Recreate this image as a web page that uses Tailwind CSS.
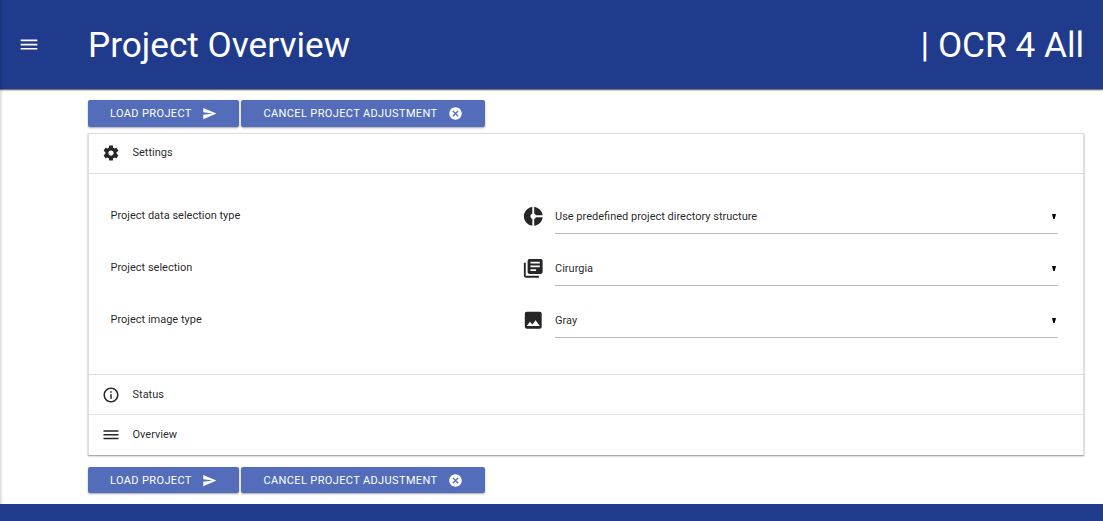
<!DOCTYPE html>
<html lang="en">
<head>
<meta charset="utf-8">
<title>Project Overview</title>
<script src="https://cdn.jsdelivr.net/npm/@tailwindcss/browser@4"></script>
</head>
<body class="relative flex h-[521px] w-[1103px] flex-col overflow-hidden bg-white font-['Roboto',sans-serif] text-[11px] text-black/87">
<svg class="hidden">
  <symbol id="menu" viewBox="0 0 24 24"><path d="M2 15.500v2h20v-2H2zm0-5v2h20v-2H2zm0-5v2h20v-2H2z"/></symbol>
  <symbol id="send" viewBox="0 0 24 24"><path d="M2.010 21L23 12 2.010 3 2 10l15 2-15 2z"/></symbol>
  <symbol id="cancel" viewBox="0 0 24 24"><path d="M12 2C6.470 2 2 6.470 2 12s4.470 10 10 10 10-4.470 10-10S17.530 2 12 2zm5 13.590L15.590 17 12 13.410 8.410 17 7 15.590 10.590 12 7 8.410 8.410 7 12 10.590 15.590 7 17 8.410 13.410 12 17 15.590z"/></symbol>
  <symbol id="settings" viewBox="0 0 24 24"><path d="M19.430 12.980c.04-.32.07-.64.07-.98s-.03-.66-.07-.98l2.110-1.650c.19-.15.24-.42.12-.64l-2-3.460c-.12-.22-.39-.3-.61-.22l-2.490 1c-.52-.4-1.080-.73-1.690-.98l-.38-2.650C14.460 2.180 14.250 2 14 2h-4c-.25 0-.46.18-.49.42l-.38 2.650c-.61.25-1.170.59-1.690.98l-2.490-1c-.23-.09-.49 0-.61.22l-2 3.460c-.13.22-.07.49.12.64l2.110 1.650c-.04.32-.07.65-.07.98s.03.66.07.98l-2.110 1.650c-.19.15-.24.42-.12.64l2 3.460c.12.22.39.3.61.22l2.490-1c.52.4 1.080.73 1.690.98l.38 2.650c.03.24.24.42.49.42h4c.25 0 .46-.18.49-.42l.38-2.650c.61-.25 1.170-.59 1.690-.98l2.490 1c.23.09.49 0 .61-.22l2-3.460c.12-.22.07-.49-.12-.64l-2.110-1.650zM12 15.500c-1.930 0-3.500-1.570-3.500-3.500s1.570-3.500 3.500-3.500 3.500 1.570 3.500 3.500-1.570 3.500-3.500 3.500z"/></symbol>
  <symbol id="info" viewBox="0 0 24 24"><path d="M11 17h2v-6h-2v6zm1-15C6.480 2 2 6.480 2 12s4.480 10 10 10 10-4.480 10-10S17.520 2 12 2zm0 18c-4.410 0-8-3.590-8-8s3.590-8 8-8 8 3.590 8 8-3.590 8-8 8zM11 9h2V7h-2v2z"/></symbol>
  <symbol id="donut" viewBox="0 0 24 24"><path d="M11 9.160V2c-5 .5-9 4.790-9 10s4 9.500 9 10v-7.160c-1-.41-2-1.520-2-2.840s1-2.430 2-2.840zM14.860 11H22c-.48-4.750-4-8.530-9-9v7.160c1 .3 1.520.98 1.860 1.840zM13 14.840V22c5-.47 8.520-4.250 9-9h-7.140c-.34.86-.86 1.540-1.860 1.840z"/></symbol>
  <symbol id="books" viewBox="0 0 24 24"><path d="M4 6H2v14c0 1.100.9 2 2 2h14v-2H4V6zm16-4H8c-1.100 0-2 .9-2 2v12c0 1.100.9 2 2 2h12c1.100 0 2-.9 2-2V4c0-1.100-.9-2-2-2zm-1 9H9V9h10v2zm-4 4H9v-2h6v2zm4-8H9V5h10v2z"/></symbol>
  <symbol id="image" viewBox="0 0 24 24"><path d="M21 19V5c0-1.100-.9-2-2-2H5c-1.100 0-2 .9-2 2v14c0 1.100.9 2 2 2h14c1.100 0 2-.9 2-2zM8.500 13.500l2.500 3.010L14.500 12l4.500 6H5l3.500-4.500z"/></symbol>
</svg>

<header class="flex h-[89px] shrink-0 items-center bg-[#203a8c] pr-[19px] pl-[19px] text-white shadow-[0_1px_2px_rgba(0,0,0,0.35),0_1px_1px_rgba(0,0,0,0.4)]">
  <svg class="size-[20px] fill-current"><use href="#menu"/></svg>
  <h1 class="ml-[49px] pt-[2px] text-[35.200px] leading-none">Project Overview</h1>
  <span class="ml-auto pt-[2px] text-[35.200px] leading-none">| OCR 4 All</span>
</header>

<main class="flex flex-1 flex-col pt-[11px] pr-[19px] pl-[88px]">
  <div class="flex h-[27px] gap-[2px] text-[11px] tracking-[0.37px] text-white">
    <button class="flex w-[151px] items-center rounded-[2px] bg-[#536dba] pl-[22px] shadow-[0_1px_2px_rgba(0,0,0,0.35)]"><span class="pt-[2px]">LOAD PROJECT</span><svg class="ml-[10.500px] size-[15px] fill-current"><use href="#send"/></svg></button>
    <button class="flex w-[244px] items-center rounded-[2px] bg-[#536dba] pl-[22.500px] shadow-[0_1px_2px_rgba(0,0,0,0.35)]"><span class="pt-[2px]">CANCEL PROJECT ADJUSTMENT</span><svg class="ml-[10.500px] size-[15px] fill-current"><use href="#cancel"/></svg></button>
  </div>

  <section class="mt-[6px] flex h-[322px] flex-col border-x border-t border-[#ddd] bg-white shadow-[0_1px_2px_rgba(0,0,0,0.3),0_1px_1px_rgba(0,0,0,0.15)]">
    <div class="flex h-[40px] shrink-0 items-center border-b border-[#ddd] pl-[12.500px]">
      <svg class="-mt-px size-[18px] fill-[#262626]"><use href="#settings"/></svg><span class="ml-[13px]">Settings</span>
    </div>
    <div class="flex h-[201px] shrink-0 flex-col border-b border-[#ddd] pt-[23px] pr-[25px] pl-[21.500px]">
      <div class="flex h-[52px]">
        <span class="w-[411.500px] pt-[11px]">Project data selection type</span>
        <svg class="mt-[7.500px] size-[22.500px] fill-[#262626]"><use href="#donut"/></svg>
        <div class="ml-[10.500px] flex h-[37px] flex-1 items-center justify-between border-b border-[#bbb]"><span class="pt-[4px]">Use predefined project directory structure</span><svg class="mt-[2px] mr-[2px] h-[5px] w-[4px] fill-black" viewBox="0 0 4 5"><path d="M0 0h4L2.700 5h-1.400z"/></svg></div>
      </div>
      <div class="flex h-[52px]">
        <span class="w-[411.500px] pt-[11px]">Project selection</span>
        <svg class="mt-[7.500px] size-[22.500px] fill-[#262626]"><use href="#books"/></svg>
        <div class="ml-[10.500px] flex h-[37px] flex-1 items-center justify-between border-b border-[#bbb]"><span class="pt-[4px]">Cirurgia</span><svg class="mt-[2px] mr-[2px] h-[5px] w-[4px] fill-black" viewBox="0 0 4 5"><path d="M0 0h4L2.700 5h-1.400z"/></svg></div>
      </div>
      <div class="flex h-[52px]">
        <span class="w-[411.500px] pt-[11px]">Project image type</span>
        <svg class="mt-[7.500px] size-[22.500px] fill-[#262626]"><use href="#image"/></svg>
        <div class="ml-[10.500px] flex h-[37px] flex-1 items-center justify-between border-b border-[#bbb]"><span class="pt-[4px]">Gray</span><svg class="mt-[2px] mr-[2px] h-[5px] w-[4px] fill-black" viewBox="0 0 4 5"><path d="M0 0h4L2.700 5h-1.400z"/></svg></div>
      </div>
    </div>
    <div class="flex h-[40px] shrink-0 items-center border-b border-[#e4e4e4] pl-[12.500px]">
      <svg class="size-[18px] fill-[#262626]"><use href="#info"/></svg><span class="ml-[13px] pt-px">Status</span>
    </div>
    <div class="flex flex-1 items-center pl-[12.500px]">
      <svg class="size-[18px] fill-[#262626]"><use href="#menu"/></svg><span class="ml-[13px]">Overview</span>
    </div>
  </section>

  <div class="mt-[12px] flex h-[26px] gap-[2px] text-[11px] tracking-[0.37px] text-white">
    <button class="flex w-[151px] items-center rounded-[2px] bg-[#536dba] pl-[22px] shadow-[0_1px_2px_rgba(0,0,0,0.35)]"><span class="pt-[2px]">LOAD PROJECT</span><svg class="ml-[10.500px] size-[15px] fill-current"><use href="#send"/></svg></button>
    <button class="flex w-[244px] items-center rounded-[2px] bg-[#536dba] pl-[22.500px] shadow-[0_1px_2px_rgba(0,0,0,0.35)]"><span class="pt-[2px]">CANCEL PROJECT ADJUSTMENT</span><svg class="ml-[10.500px] size-[15px] fill-current"><use href="#cancel"/></svg></button>
  </div>
</main>
<footer class="h-[17px] shrink-0 bg-[#203a8c]"></footer>
<div class="absolute top-0 left-0 h-[504px] w-[3px] bg-linear-to-r from-black/15 to-transparent"></div>
</body>
</html>
